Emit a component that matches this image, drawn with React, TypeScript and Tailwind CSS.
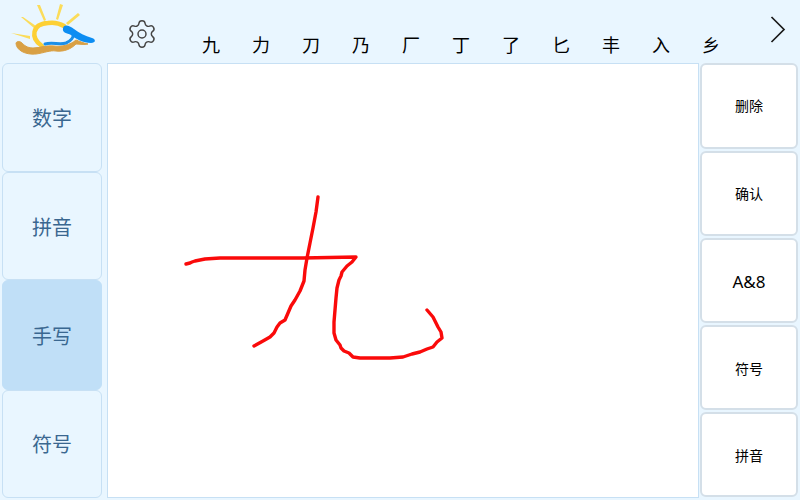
import { Settings } from "lucide-react";

const candidates = ["九", "力", "刀", "乃", "厂", "丁", "了", "匕", "丰", "入", "乡"];

const leftTabs = [
  { label: "数字", cls: "h-[109px] pt-[2px]" },
  { label: "拼音", cls: "h-[108px] pt-[3px]" },
  { label: "手写", cls: "h-[110px] pt-[3px]", active: true },
  { label: "符号", cls: "h-[108px] pt-[2px]" },
];

const rightKeys = [
  { label: "删除", cls: "h-[86px] pb-[2px] text-[14px]" },
  { label: "确认", cls: "h-[85px] mt-[2px] text-[14px]" },
  { label: "A&8", cls: "h-[85px] mt-[2px] pt-[2px] text-[17px]" },
  { label: "符号", cls: "h-[85px] mt-[2px] pt-[2px] text-[14px]" },
  { label: "拼音", cls: "h-[85px] mt-[2px] pt-[2px] text-[14px]" },
];

// handwriting strokes, in page coordinates
const strokeOne =
  "M186 264 L190 263 L192 262 L195 261 L205 259 L220 258 L250 258 L303 258 L356 257 L352 262 L347 266 L342 272 L341 276 L339 280 L337 288 L336 298 L335 310 L334 322 L334 333 L336 340 L340 345 L341 348 L344 351 L349 353 L353 357 L360 358 L370 358 L390 358 L403 357 L412 354 L420 352 L427 349 L433 347 L437 342 L442 338 L441 332 L438 327 L433 317 L427 310";
const strokeTwo =
  "M318 197 L316 212 L313 228 L310 243 L307 258 L305 270 L304 281 L300 291 L295 300 L291 306 L288 313 L285 320 L280 323 L277 327 L274 333 L270 337 L263 341 L254 346";

function Logo() {
  return (
    <svg width="100" height="62" viewBox="0 0 100 62" fill="none">
      <g fill="#fbdc5a">
        <path d="M37 5 L40 5 L46 20 L44 21 Z" />
        <path d="M60 4 L63 5 L58 20 L56 19 Z" />
        <path d="M78 13 L80 15 L68 25 L66 23 Z" />
        <path d="M21 17 L23 17 L36 26 L34 28 Z" />
        <path d="M11 33 L30 36 L30 39 Z" />
      </g>
      <path d="M42 46 C30 38 32 24 48 23 C54 22 59 23 64 26" stroke="#fdd035" strokeWidth="4.5" strokeLinecap="round" />
      <path
        d="M16 43 C16 50 25 55 36 54 C44 53 50 50 56 51 C64 52 71 49 76 44 C80 44 84 45 88 44 C83 43 79 41 76 40 C70 45 62 47 54 46 C46 45 40 48 33 48 C27 48 24 45 22 43 C20 41 17 41 16 43 Z"
        fill="#d9a044"
        stroke="#d9a044"
        strokeLinejoin="round"
      />
      <path
        d="M45 44 C52 42 60 45 66 43 C71 41 74 37 73 34"
        stroke="#1a8fe8"
        strokeWidth="3"
        strokeLinecap="round"
      />
      <path
        d="M63 28 C64 24 69 25 74 29 C79 33 85 36 92 38 C96 39 96 43 91 43 C83 43 76 39 71 35 C67 33 62 33 63 28 Z"
        fill="#0d8df2"
      />
    </svg>
  );
}

export default function App() {
  return (
    <div
      className="w-[800px] h-[500px] flex flex-col overflow-hidden bg-[#e9f6ff]"
      style={{ fontFamily: '"Noto Sans", "Noto Sans CJK SC", sans-serif' }}
    >
      <div className="h-[63px] flex shrink-0">
        <div className="w-[100px] h-[62px] shrink-0">
          <Logo />
        </div>
        <div className="w-[84px] shrink-0 pl-[26px] pt-[18px]">
          <Settings size={32} strokeWidth={1.1} className="text-[#444444]" />
        </div>
        <div className="flex items-start pt-[32px] pl-[2px]">
          {candidates.map((c) => (
            <div key={c} className="w-[50px] text-center text-[18px] leading-[26px] text-black">
              {c}
            </div>
          ))}
        </div>
        <div className="ml-auto pr-[14px] pt-[16px]">
          <svg width="16" height="27" viewBox="0 0 16 27" fill="none" stroke="#1a1a1a" strokeWidth="1.7">
            <path d="M1.5 1 L14 13.5 L1.5 26" />
          </svg>
        </div>
      </div>
      <div className="flex flex-1 min-h-0">
        <div className="w-[100px] ml-[2px] shrink-0 flex flex-col">
          {leftTabs.map((t) => (
            <div
              key={t.label}
              className={`${t.cls} flex items-center justify-center rounded-md border text-[20px] text-[#3a6790] ${
                t.active ? "bg-[#c0dff7] border-[#c0dff7]" : "bg-[#e9f6ff] border-[#c7e0f4]"
              }`}
            >
              {t.label}
            </div>
          ))}
        </div>
        <div className="ml-[5px] w-[592px] h-[435px] shrink-0 bg-white border border-[#c7e0f4] overflow-hidden">
          <svg width="592" height="435" viewBox="108 64 592 435" fill="none" stroke="#fa0a0a" strokeWidth="3.4" strokeLinecap="round" strokeLinejoin="round">
            <path d={strokeOne} />
            <path d={strokeTwo} />
          </svg>
        </div>
        <div className="w-[98px] ml-px shrink-0 flex flex-col">
          {rightKeys.map((k) => (
            <div
              key={k.label + k.cls}
              className={`${k.cls} flex items-center justify-center rounded-md border-2 border-[#d4dfe8] bg-white text-black`}
            >
              {k.label}
            </div>
          ))}
        </div>
      </div>
    </div>
  );
}
